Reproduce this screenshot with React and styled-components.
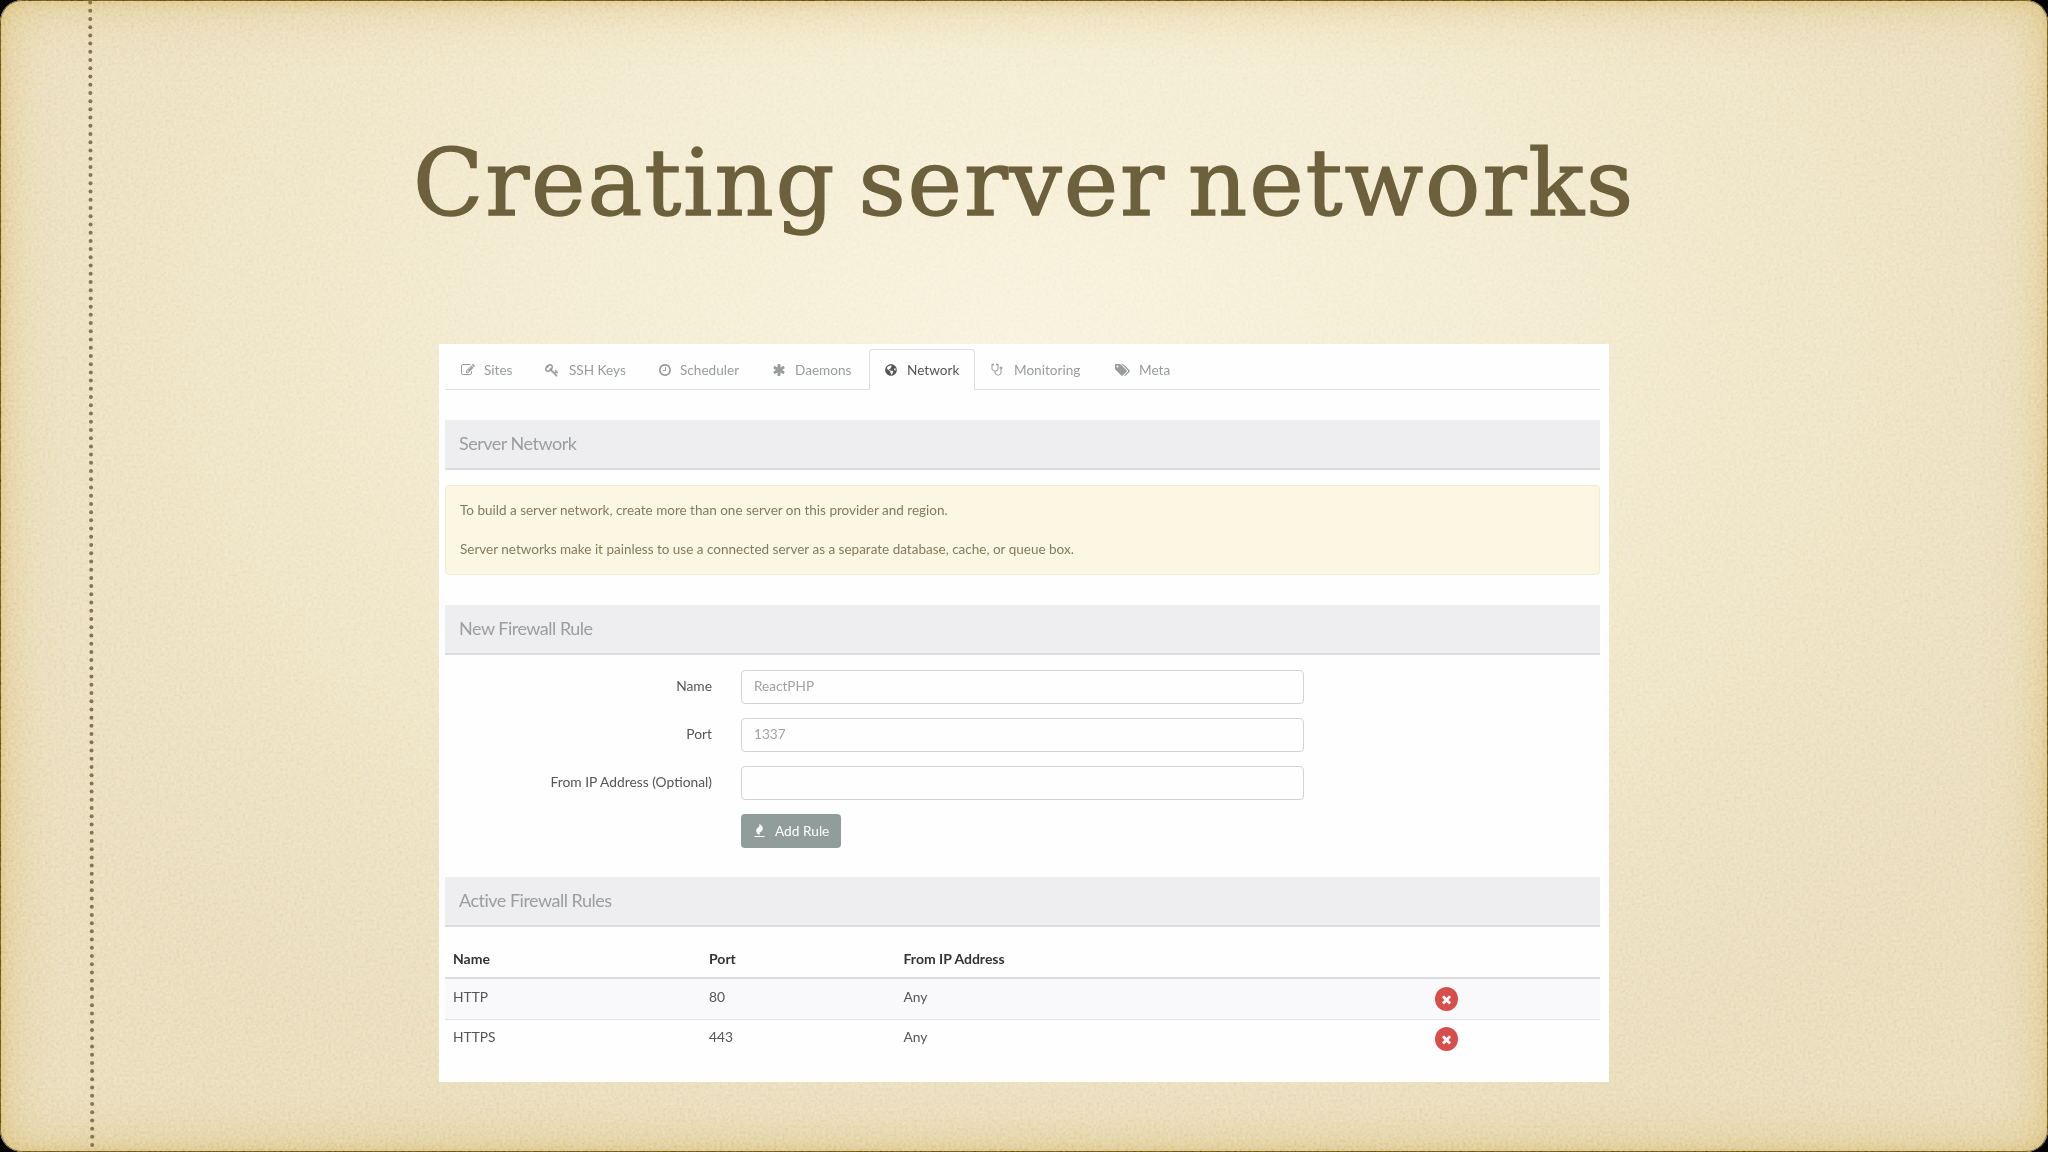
import React from "react";
import styled, { createGlobalStyle } from "styled-components";
import { FaGlobeAmericas } from "react-icons/fa";

const GlobalStyle = createGlobalStyle`
  * {
    box-sizing: border-box;
  }

  body {
    margin: 0;
    background: #000;
    font-family: Lato, "Liberation Sans", sans-serif;
  }
`;

// Icon glyphs, drawn on a 1792 grid
const Glyphs = {
  edit: 'M888 1184l116-116-152-152-116 116v56h96v96h56zm440-720q-16-16-33 1l-350 350q-17 17-1 33t33-1l350-350q17-17 1-33zm80 594v190q0 119-84.5 203.5t-203.5 84.5h-832q-119 0-203.5-84.5t-84.5-203.5v-832q0-119 84.5-203.5t203.5-84.5h832q63 0 117 25 15 7 18 23 3 17-9 29l-49 49q-14 14-32 8-23-6-45-6h-832q-66 0-113 47t-47 113v832q0 66 47 113t113 47h832q66 0 113-47t47-113v-126q0-13 9-22l64-64q15-15 35-7t20 29zm-96-738l288 288-672 672h-288v-288zm444 132l-92 92-288-288 92-92q28-28 68-28t68 28l152 152q28 28 28 68t-28 68z',
  key: 'M832 512q0-80-56-136t-136-56-136 56-56 136q0 42 19 83-41-19-83-19-80 0-136 56t-56 136 56 136 136 56 136-56 56-136q0-42-19-83 41 19 83 19 80 0 136-56t56-136zm851 704q0 17-49 66t-66 49q-9 0-28.5-16t-36.5-33-38.5-40-24.5-26l-96 96 220 220q28 28 28 68 0 42-39 81t-81 39q-40 0-68-28l-671-671q-176 131-365 131-163 0-265.5-102.5t-102.5-265.5q0-160 95-313t248-248 313-95q163 0 265.5 102.5t102.5 265.5q0 189-131 365l355 355 96-96q-3-3-26-24.5t-40-38.5-33-36.5-16-28.5q0-17 49-66t66-49q13 0 23 10 6 6 46 44.5t82 79.5 86.5 86 73 78 28.5 41z',
  clock: 'M1024 544v448q0 14-9 23t-23 9h-320q-14 0-23-9t-9-23v-64q0-14 9-23t23-9h224v-352q0-14 9-23t23-9h64q14 0 23 9t9 23zm416 352q0-148-73-273t-198-198-273-73-273 73-198 198-73 273 73 273 198 198 273 73 273-73 198-198 73-273zm224 0q0 209-103 385.5t-279.5 279.5-385.5 103-385.5-103-279.5-279.5-103-385.5 103-385.5 279.5-279.5 385.5-103 385.5 103 279.5 279.5 103 385.5z',
  asterisk: 'M1546 1050q46 26 59.5 77.5t-12.5 97.5l-64 110q-26 46-77.5 59.5t-97.5-12.5l-266-153v307q0 52-38 90t-90 38h-128q-52 0-90-38t-38-90v-307l-266 153q-46 26-97.5 12.5t-77.5-59.5l-64-110q-26-46-12.5-97.5t59.5-77.5l266-154-266-154q-46-26-59.5-77.5t12.5-97.5l64-110q26-46 77.5-59.5t97.5 12.5l266 153v-307q0-52 38-90t90-38h128q52 0 90 38t38 90v307l266-153q46-26 97.5-12.5t77.5 59.5l64 110q26 46 12.5 97.5t-59.5 77.5l-266 154z',
  stethoscope: 'M1344 640q0-26-19-45t-45-19-45 19-19 45 19 45 45 19 45-19 19-45zm128 0q0 62-35.5 111t-92.5 70v395q0 159-131.5 271.5t-316.5 112.5-316.5-112.5-131.5-271.5v-132q-164-20-274-128t-110-252v-512q0-26 19-45t45-19q6 0 16 2 17-30 47-48t65-18q53 0 90.5 37.5t37.5 90.5-37.5 90.5-90.5 37.5q-33 0-64-18v402q0 106 94 181t226 75 226-75 94-181v-402q-31 18-64 18-53 0-90.5-37.5t-37.5-90.5 37.5-90.5 90.5-37.5q35 0 65 18t47 48q10-2 16-2 26 0 45 19t19 45v512q0 144-110 252t-274 128v132q0 106 94 181t226 75 226-75 94-181v-395q-57-21-92.5-70t-35.5-111q0-80 56-136t136-56 136 56 56 136z',
  tags: 'M576 448q0-53-37.5-90.5t-90.5-37.5-90.5 37.5-37.5 90.5 37.5 90.5 90.5 37.5 90.5-37.5 37.5-90.5zm1067 576q0 53-37 90l-491 492q-39 37-91 37-53 0-90-37l-715-716q-38-37-64.5-101t-26.5-117v-416q0-52 38-90t90-38h416q53 0 117 26.5t102 64.5l715 714q37 39 37 91zm384 0q0 53-37 90l-491 492q-39 37-91 37-36 0-59-14t-53-45l470-470q37-37 37-90 0-52-37-91l-715-714q-38-38-102-64.5t-117-26.5h224q53 0 117 26.5t102 64.5l715 714q37 39 37 91z',
  fire: 'M1600 1696v64q0 13-9.5 22.5t-22.5 9.5h-1344q-13 0-22.5-9.5t-9.5-22.5v-64q0-13 9.5-22.5t22.5-9.5h1344q13 0 22.5 9.5t9.5 22.5zm-256-1056q0 78-24.5 144t-64 112.5-87.5 88-96 77.5-87.5 72-64 81.5-24.5 96.5q0 96 67 224l-4-1 1 1q-90-41-160-83t-138.5-100-113.5-122.5-72.5-150.5-27.5-184q0-78 24.5-144t64-112.5 87.5-88 96-77.5 87.5-72 64-81.5 24.5-96.5q0-94-66-224l3 1-1-1q90 41 160 83t138.5 100 113.5 122.5 72.5 150.5 27.5 184z',
  times: 'M1490 1322q0 40-28 68l-136 136q-28 28-68 28t-68-28l-294-294-294 294q-28 28-68 28t-68-28l-136-136q-28-28-28-68t28-68l294-294-294-294q-28-28-28-68t28-68l136-136q28-28 68-28t68 28l294 294 294-294q28-28 68-28t68 28l136 136q28 28 28 68t-28 68l-294 294 294 294q28 28 28 68z',
};

const Glyph = ({ name, size = 14 }) => (
  <svg width={size} height={size} viewBox="0 0 1792 1792" fill="currentColor" overflow="visible">
    <path d={Glyphs[name]} />
  </svg>
);

// Tabs data
const TabsContent = [
  { name: 'Sites', icon: 'edit', width: 84, gap: 9 },
  { name: 'SSH Keys', icon: 'key', width: 113, gap: 10 },
  { name: 'Scheduler', icon: 'clock', width: 114, gap: 8 },
  { name: 'Daemons', icon: 'asterisk', width: 113, gap: 9 },
  { name: 'Network', icon: 'globe', width: 106, gap: 10, active: true },
  { name: 'Monitoring', icon: 'stethoscope', width: 123, gap: 9 },
  { name: 'Meta', icon: 'tags', width: 90, gap: 11 },
];

const Rules = [
  { name: 'HTTP', port: '80', from: 'Any' },
  { name: 'HTTPS', port: '443', from: 'Any' },
];

const Fields = [
  { label: 'Name', placeholder: 'ReactPHP' },
  { label: 'Port', placeholder: '1337' },
  { label: 'From IP Address (Optional)', placeholder: '' },
];

const Slide = styled.main`
  position: relative;
  width: 2048px;
  height: 1152px;
  overflow: hidden;
  display: flex;
  flex-direction: column;
  align-items: center;
  border-radius: 22px;
  background: radial-gradient(ellipse 1250px 860px at 50% 30%, #f8f0d8 0%, #f3eacd 35%, #eaddba 75%, #e6d8b2 100%);
`;

const Edge = styled.div`
  position: absolute;
  inset: 0;
  border: 1.5px solid #604a12;
  border-radius: 22px;
  box-shadow: inset 0 0 54px rgba(206, 166, 70, 0.6), inset 0 0 12px rgba(200, 160, 75, 0.45);
`;

const Grain = styled.svg`
  position: absolute;
  inset: 0;
  opacity: 0.75;
  mix-blend-mode: soft-light;
`;

const Perforation = styled.svg`
  position: absolute;
  top: 0;
  left: 85px;
`;

const Title = styled.h1`
  position: relative;
  margin: 129px 0 0;
  height: 215px;
  color: #6d603c;
  font-family: "DejaVu Serif", serif;
  font-size: 92px;
  font-weight: 400;
  line-height: 110px;
  letter-spacing: 1.9px;
  word-spacing: -9px;
  white-space: nowrap;
  -webkit-text-stroke: 1.4px #6d603c;
  stroke-linejoin: round;
`;

const Card = styled.section`
  position: relative;
  width: 1170px;
  height: 738px;
  padding: 5px 9px 0 6px;
  background: #fefefe;
`;

const Tabs = styled.nav`
  display: flex;
  height: 41px;
  border-bottom: 1px solid #dfdee2;
`;

const Tab = styled.a`
  display: flex;
  align-items: center;
  gap: ${props => props.$gap}px;
  width: ${props => props.$width}px;
  height: 41px;
  padding-left: 15px;
  padding-bottom: 1px;
  border: 1px solid ${props => props.$active ? '#dfdee2' : 'transparent'};
  border-bottom: 0;
  border-radius: 4px 4px 0 0;
  background: ${props => props.$active ? '#fefefe' : 'transparent'};
  color: ${props => props.$active ? '#555' : '#999b9c'};
  font-size: 13.6px;
`;

const Bar = styled.h2`
  margin: ${props => props.$top}px 0 0;
  height: 50px;
  padding-left: 14px;
  border-bottom: 2px solid #dbdadd;
  background: #eeedf0;
  color: #9b9e9f;
  font-size: 18px;
  font-weight: 400;
  line-height: 47px;
  letter-spacing: -0.5px;
`;

const Notice = styled.div`
  margin-top: 15px;
  height: 90px;
  padding: 14px;
  border: 1px solid #f5edd2;
  border-radius: 4px;
  background: #fcf7e3;
  color: #857a5e;
`;

const NoticeText = styled.p`
  margin: 0 0 19px;
  font-size: 13.5px;
  line-height: 20px;
`;

const Form = styled.form`
  display: flex;
  flex-direction: column;
  gap: 15px;
  padding-top: 14.5px;
`;

const FormRow = styled.div`
  display: grid;
  grid-template-columns: 267px 563px;
  column-gap: 29px;
  align-items: center;
  height: 33.2px;
`;

const Label = styled.label`
  padding-bottom: 2px;
  color: #555;
  font-size: 13.8px;
  text-align: right;
`;

const Input = styled.input`
  height: 34px;
  padding: 0 12px 1px 12px;
  border: 1.5px solid #d3d1d6;
  border-radius: 4px;
  background: #fefefe;
  font-family: inherit;
  font-size: 13.6px;

  &::placeholder {
    color: #a2a1a4;
  }
`;

const AddButton = styled.button`
  grid-column: 2;
  display: flex;
  align-items: center;
  gap: 9px;
  width: 100px;
  height: 34px;
  padding: 0 0 1px 12px;
  border: 0;
  border-radius: 4px;
  background: #919d9b;
  color: #fff;
  font-family: inherit;
  font-size: 13.7px;
`;

const TableRow = styled.div`
  display: grid;
  grid-template-columns: 256px 194.5px 531px 1fr;
  align-items: ${props => props.$head ? 'end' : 'center'};
  height: ${props => props.$head ? 52 : 40.5}px;
  padding: 0 0 ${props => props.$head ? 10 : props.$striped ? 5 : 7}px 8px;
  border-bottom: ${props => props.$head ? '2px solid #dbdadf' : props.$striped ? '1px solid #e0dfe3' : '0'};
  background: ${props => props.$striped ? '#f9f8fb' : 'transparent'};
  color: ${props => props.$head ? '#333' : '#555'};
  font-size: ${props => props.$head ? 14 : 13.8}px;
  font-weight: ${props => props.$head ? 700 : 400};
`;

const DeleteButton = styled.button`
  display: flex;
  align-items: center;
  justify-content: center;
  width: 23px;
  height: 24px;
  margin-top: 5px;
  padding: 0;
  border: 0;
  border-radius: 50%;
  background: #d64f4b;
  color: #fff;
`;

const dots = Array.from({ length: 140 }, (_, i) => i);

const FirewallPanel = () => (
  <Card>
    <Tabs>
      {TabsContent.map(tab => (
        <Tab key={tab.name} $active={tab.active} $width={tab.width} $gap={tab.gap}>
          {tab.icon === 'globe' ? <FaGlobeAmericas size={12} /> : <Glyph name={tab.icon} />}
          {tab.name}
        </Tab>
      ))}
    </Tabs>

    <Bar $top={30}>Server Network</Bar>
    <Notice>
      <NoticeText>To build a server network, create more than one server on this provider and region.</NoticeText>
      <NoticeText>Server networks make it painless to use a connected server as a separate database, cache, or queue box.</NoticeText>
    </Notice>

    <Bar $top={30}>New Firewall Rule</Bar>
    <Form>
      {Fields.map(field => (
        <FormRow key={field.label}>
          <Label>{field.label}</Label>
          <Input placeholder={field.placeholder} />
        </FormRow>
      ))}
      <FormRow>
        <AddButton type="button"><Glyph name="fire" size={13} />Add Rule</AddButton>
      </FormRow>
    </Form>

    <Bar $top={30}>Active Firewall Rules</Bar>
    <TableRow $head>
      <span>Name</span>
      <span>Port</span>
      <span>From IP Address</span>
    </TableRow>
    {Rules.map((rule, i) => (
      <TableRow key={rule.name} $striped={i === 0}>
        <span>{rule.name}</span>
        <span>{rule.port}</span>
        <span>{rule.from}</span>
        <DeleteButton><Glyph name="times" size={13} /></DeleteButton>
      </TableRow>
    ))}
  </Card>
);

const App = () => (
  <>
    <GlobalStyle />
    <Slide>
      <Edge />
      <Grain width="2048" height="1152">
        <filter id="grain" x="0" y="0" width="100%" height="100%">
          <feTurbulence type="fractalNoise" baseFrequency="0.35" numOctaves="3" seed="4" />
          <feColorMatrix
            type="matrix"
            values="1 0 0 0 0  1 0 0 0 0  1 0 0 0 0  0 0 0 0 1"
          />
        </filter>
        <rect width="2048" height="1152" filter="url(#grain)" />
      </Grain>
      <Perforation width="16" height="1152">
        {dots.map(i => (
          <circle key={i} cx={5.2 + i * 0.0145} cy={2.5 + i * 8.22} r="2" fill="#857653" />
        ))}
      </Perforation>
      <Title>Creating server networks</Title>
      <FirewallPanel />
    </Slide>
  </>
);

export default App;
